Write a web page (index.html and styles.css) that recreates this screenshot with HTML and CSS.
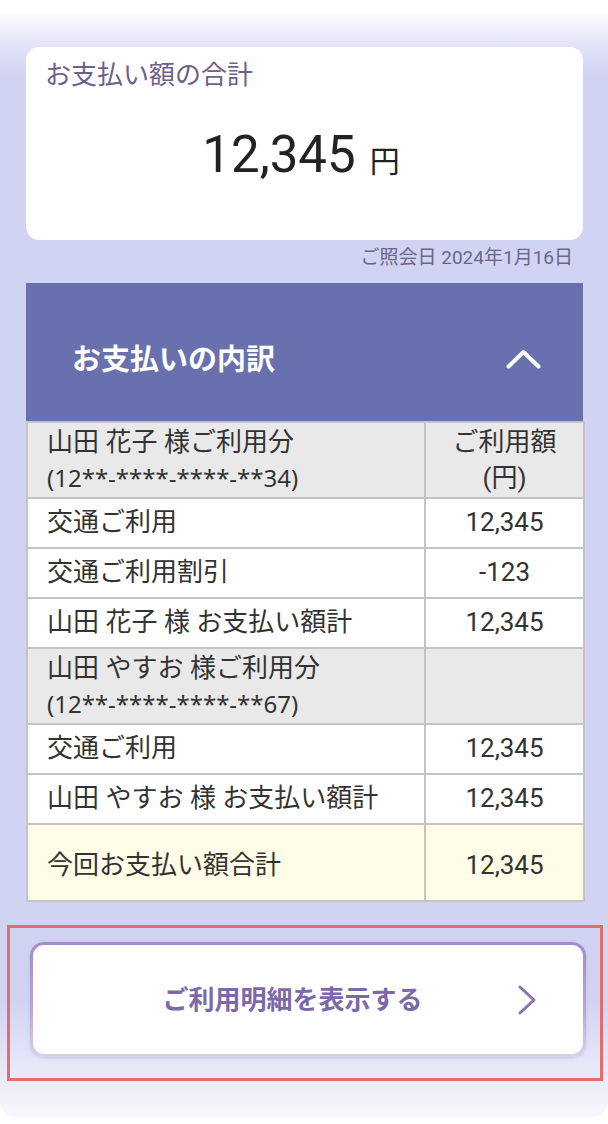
FILE: index.html
```html
<!DOCTYPE html>
<html lang="ja">
<head>
<meta charset="utf-8">
<title>お支払い額の合計</title>
<link rel="stylesheet" href="styles.css">
</head>
<body>
<main class="panel">
  <section class="total-card">
    <h1 class="total-title">お支払い額の合計</h1>
    <p class="total-amount"><span class="num">12,345</span><span class="yen">円</span></p>
  </section>
  <p class="inquiry-date">ご照会日 2024年1月16日</p>

  <section class="breakdown">
    <div class="breakdown-head">
      <h2>お支払いの内訳</h2>
      <svg class="chev-up" width="35" height="20" viewBox="0 0 35 20"><polyline points="2.5,17.5 17.5,3 32.5,17.5" fill="none" stroke="#fff" stroke-width="4" stroke-linecap="round" stroke-linejoin="round"/></svg>
    </div>
    <table class="detail">
      <colgroup><col class="c1"><col class="c2"></colgroup>
      <tr class="grp h2l">
        <td>山田 花子 様ご利用分<br><span class="card">(12**-****-****-**34)</span></td>
        <td class="amt">ご利用額<br>(円)</td>
      </tr>
      <tr><td>交通ご利用</td><td class="amt">12,345</td></tr>
      <tr><td>交通ご利用割引</td><td class="amt">-123</td></tr>
      <tr><td>山田 花子 様 お支払い額計</td><td class="amt">12,345</td></tr>
      <tr class="grp h2l">
        <td>山田 やすお 様ご利用分<br><span class="card">(12**-****-****-**67)</span></td>
        <td class="amt"></td>
      </tr>
      <tr><td>交通ご利用</td><td class="amt">12,345</td></tr>
      <tr><td>山田 やすお 様 お支払い額計</td><td class="amt">12,345</td></tr>
      <tr class="sum"><td>今回お支払い額合計</td><td class="amt">12,345</td></tr>
    </table>
  </section>

  <div class="highlight">
    <button class="detail-btn" type="button">
      <span class="btn-label">ご利用明細を表示する</span>
      <svg class="chev-right" width="20" height="32" viewBox="0 0 20 32"><polyline points="3,3 17,16 3,29" fill="none" stroke="#8a72b4" stroke-width="3" stroke-linecap="round" stroke-linejoin="round"/></svg>
    </button>
  </div>
</main>
</body>
</html>
```

FILE: styles.css
```css
* { box-sizing: border-box; }

html, body {
  margin: 0;
  padding: 0;
  background: #ffffff;
}

body {
  font-family: Roboto, "Noto Sans CJK JP", sans-serif;
  color: #333333;
}

.panel {
  height: 1117px;
  padding-top: 47px;
  border-radius: 0 0 16px 16px;
  background: linear-gradient(to bottom,
    #ffffff 0px,
    #ffffff 12px,
    #e6e7f8 40px,
    #d1d3f3 75px,
    #d1d3f3 1000px,
    #e6e7f8 1065px,
    #f7f7fd 1117px);
}

.total-card {
  margin: 0 25px 0 26px;
  height: 193px;
  background: #ffffff;
  border-radius: 13px;
  padding: 10px 20px 0 19px;
}

.total-title {
  margin: 0;
  font-size: 26px;
  line-height: 36px;
  font-weight: 400;
  color: #6c6189;
}

.total-amount {
  margin: 27px 0 0;
  text-align: center;
  line-height: 70px;
  color: #222222;
  padding-right: 6px;
}

.total-amount .num {
  font-size: 51px;
}

.total-amount .yen {
  font-size: 30px;
  margin-left: 14px;
}

.inquiry-date {
  margin: 5px 35px 0 0;
  text-align: right;
  font-size: 19px;
  line-height: 26px;
  color: #6d6585;
}

.breakdown {
  margin: 12px 25px 0 26px;
}

.breakdown-head {
  height: 138px;
  background: #6970ae;
  display: flex;
  align-items: center;
  justify-content: space-between;
  padding: 16px 42px 0 46px;
}

.breakdown-head h2 {
  margin: 0;
  font-size: 29px;
  font-weight: 700;
  color: #ffffff;
  line-height: 40px;
}

.chev-up { display: block; margin-top: -2px; }

.detail {
  width: 100%;
  border-collapse: collapse;
  table-layout: fixed;
  font-size: 26px;
  color: #333333;
  background: #ffffff;
}

.detail col.c1 { width: 398px; }
.detail col.c2 { width: 159px; }

.detail td {
  border: 2px solid #c4c4c4;
  height: 50px;
  padding: 2px 16px 3px 19px;
  line-height: 35px;
  vertical-align: middle;
}

.detail td.amt {
  text-align: center;
  padding: 2px 0 3px 0;
}

.detail tr.h2l td {
  height: 76px;
  padding-top: 0;
  padding-bottom: 0;
  line-height: 36px;
}

.detail tr.grp td { background: #e9e9e9; }

.detail .card {
  font-family: "Noto Sans", "Noto Sans CJK JP", sans-serif;
  font-size: 24px;
}

.detail tr.sum td {
  height: 77px;
  background: #fffde7;
  padding-top: 9px;
}

.highlight {
  margin: 23px 5px 0 7px;
  border: 3px solid #e86a6b;
  padding: 14px 14px 21px 20px;
}

.detail-btn {
  width: 100%;
  height: 115px;
  display: flex;
  align-items: center;
  padding: 0 46px 0 35px;
  border: 3px solid transparent;
  border-radius: 14px;
  background:
    linear-gradient(#ffffff, #ffffff) padding-box,
    linear-gradient(to bottom, #a48cca, #b9a5d6 60%, #dccfec) border-box;
  box-shadow: 0 1px 3px rgba(120, 100, 170, 0.25);
  font-family: inherit;
  cursor: pointer;
}

.btn-label {
  flex: 1;
  text-align: center;
  font-size: 26px;
  font-weight: 700;
  color: #7d68a9;
  line-height: 36px;
}

.chev-right { display: block; flex: none; }
```
